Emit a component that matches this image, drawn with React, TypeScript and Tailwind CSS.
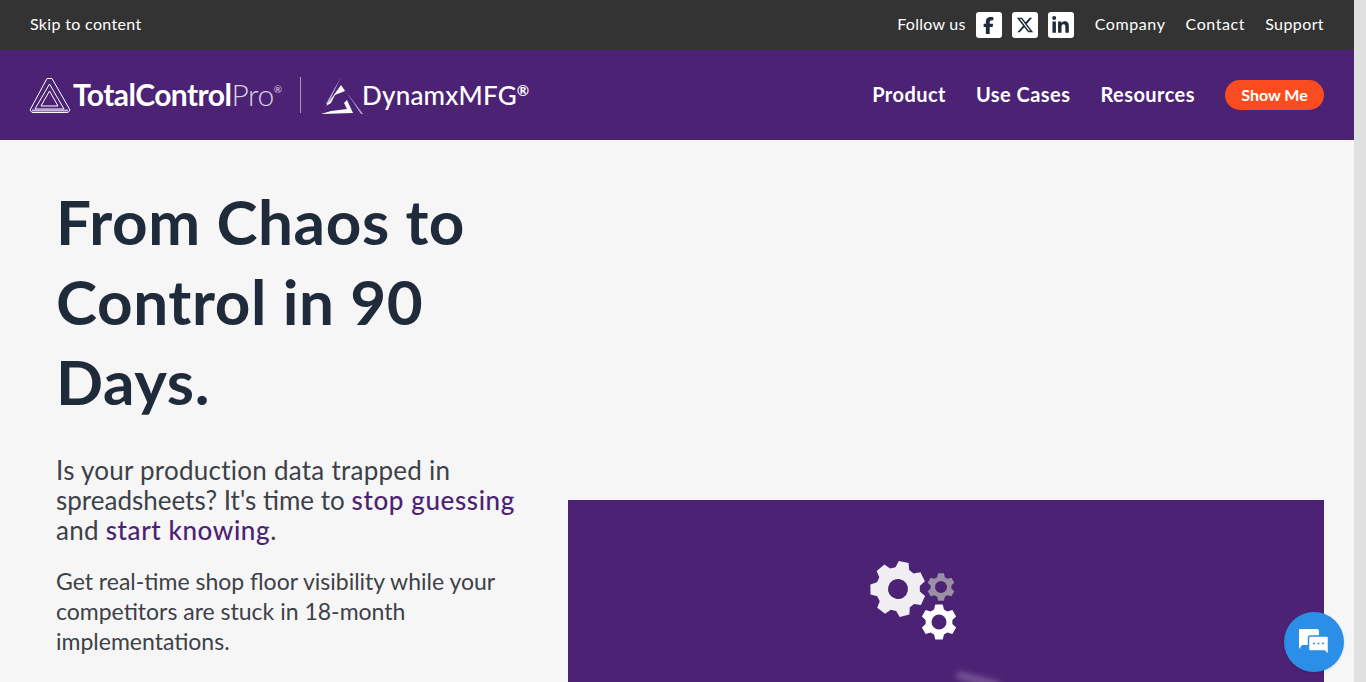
import React from 'react'
import { FaFacebookF, FaXTwitter, FaLinkedinIn } from 'react-icons/fa6'

const font = { fontFamily: 'Lato, "Liberation Sans", sans-serif' }

// gear outline with a round hole, six or seven teeth
function gearPath(cx: number, cy: number, teeth: number, outer: number, inner: number, hole: number) {
  const pts: string[] = []
  const step = (Math.PI * 2) / teeth
  for (let i = 0; i < teeth; i++) {
    const a = i * step - Math.PI / 2
    const corners: [number, number][] = [
      [inner, a - step * 0.36],
      [outer, a - step * 0.2],
      [outer, a + step * 0.2],
      [inner, a + step * 0.36],
    ]
    corners.forEach(([r, t]) => {
      pts.push(`${(cx + r * Math.cos(t)).toFixed(2)} ${(cy + r * Math.sin(t)).toFixed(2)}`)
    })
  }
  const ring = `M${cx - hole} ${cy}a${hole} ${hole} 0 1 0 ${hole * 2} 0a${hole} ${hole} 0 1 0 ${-hole * 2} 0Z`
  return `M${pts.join('L')}Z${ring}`
}

function Gears() {
  return (
    <svg width="90" height="84" viewBox="0 0 90 84" className="block">
      <path d={gearPath(29, 33, 7, 28, 22, 10)} fill="#f0eef2" fillRule="evenodd" transform="rotate(12 29 33)" />
      <path d={gearPath(72, 31, 6, 14, 10.5, 6)} fill="#9a8fa5" fillRule="evenodd" />
      <path d={gearPath(70, 66, 6, 18, 13.5, 7.5)} fill="#ffffff" fillRule="evenodd" />
    </svg>
  )
}

function TcpMark() {
  return (
    <svg width="42" height="36" viewBox="0 0 42 36" fill="none" stroke="#fff" strokeWidth="1" className="-ml-[1px] block">
      <path d="M18 1.500h5L41 33l-2 2.500H3L1 33Z" />
      <path d="M20.500 7L35 32H6Z" />
      <path d="M20.500 14L29 29H12Z" />
      <path d="M3 33.500H39" stroke="#c9b8dc" strokeWidth="2" />
    </svg>
  )
}

function DynamxMark() {
  return (
    <svg width="42" height="37" viewBox="0 0 42 37" className="block">
      <path d="M20 0L5 27l2 0Z" fill="#fff" fillOpacity="0.7" />
      <path d="M20 8l22 29h-2L24 13Z" fill="#fff" fillOpacity="0.6" />
      <path d="M5 29L20 8l4 6-10 4-4 8Z" fill="#fff" />
      <path d="M0 37l32-1-6-13-3 3 3 6-16 2Z" fill="#fff" />
    </svg>
  )
}

function SocialTile({ children }: { children: React.ReactNode }) {
  return (
    <a className="flex h-[26px] w-[26px] items-center justify-center rounded-[3px] bg-white text-[#1f2a3a]">
      {children}
    </a>
  )
}

function ChatIcon() {
  return (
    <svg width="32" height="28" viewBox="0 0 32 28" className="block">
      <path d="M2 1h17a2 2 0 0 1 2 2v14H4l-3 4V2a1 1 0 0 1 1-1Z" fill="#fff" />
      <path
        d="M12 8h17a1.500 1.500 0 0 1 1.500 1.500V27l-4-4H12a1.500 1.500 0 0 1-1.500-1.500v-12A1.500 1.500 0 0 1 12 8Z"
        fill="#fff"
        stroke="#2b8fe8"
        strokeWidth="1.500"
      />
      <circle cx="16" cy="15.500" r="1" fill="#2b8fe8" />
      <circle cx="20.500" cy="15.500" r="1" fill="#2b8fe8" />
      <circle cx="25" cy="15.500" r="1" fill="#2b8fe8" />
    </svg>
  )
}

export default function App() {
  return (
    <div className="relative flex h-[682px] w-full overflow-hidden bg-[#e0e0e0]" style={font}>
      <div className="flex min-w-0 flex-1 flex-col bg-[#f6f6f6]">
        {/* top bar */}
        <div className="flex h-[50px] shrink-0 items-center justify-between bg-[#333333] pb-[2px] pl-[30px] pr-[30px] text-[16px] text-white">
          <a className="tracking-[0.33px]">Skip to content</a>
          <div className="flex items-center">
            <span className="mr-[10px] tracking-[0.25px]">Follow us</span>
            <div className="flex gap-[10px] pt-[2px]">
              <SocialTile><FaFacebookF size={17} /></SocialTile>
              <SocialTile><FaXTwitter size={18} /></SocialTile>
              <SocialTile><FaLinkedinIn size={19} /></SocialTile>
            </div>
            <div className="ml-[21px] flex gap-[20px] tracking-[0.6px]">
              <a>Company</a>
              <a>Contact</a>
              <a className="tracking-[0.4px]">Support</a>
            </div>
          </div>
        </div>

        {/* nav */}
        <div className="flex h-[90px] shrink-0 items-center justify-between bg-[#4c2275] pl-[30px] pr-[30px] text-white">
          <div className="flex items-center">
            <TcpMark />
            <span className="mb-[2px] ml-[2px] text-[30px] font-bold leading-none tracking-[-0.55px]">
              TotalControl<span className="font-light tracking-[-0.4px] text-[#d8cfe2]">Pro</span>
            </span>
            <span className="mb-[12px] text-[10px] text-[#d8cfe2]">®</span>
            <div className="ml-[18px] mr-[20px] h-[36px] w-px bg-[#a995bd]" />
            <DynamxMark />
            <span className="mb-[1px] -ml-[1px] text-[26px] font-medium leading-none tracking-[0.2px]">DynamxMFG</span>
            <span className="mb-[10px] text-[15px] font-bold leading-none">®</span>
          </div>
          <div className="flex items-center gap-[30px] pb-[2px] text-[20px] font-bold tracking-[0.45px]">
            <a>Product</a>
            <a>Use Cases</a>
            <a>Resources</a>
            <a className="mt-[2px] flex h-[30px] w-[99px] items-center justify-center rounded-full bg-[#fb4c1f] pb-[1px] text-[16px] tracking-normal">
              Show Me
            </a>
          </div>
        </div>

        {/* hero */}
        <div className="flex min-h-0 flex-1 pl-[56px] pr-[30px]">
          <div className="w-[512px] shrink-0 pt-[41px] text-[#3d4148]">
            <h1 className="w-[470px] text-[62px] font-bold leading-[80px] tracking-[0.6px] text-[#1f2a3a]">
              From Chaos to Control in 90 Days.
            </h1>
            <p className="mt-[34px] w-[470px] text-[26px] leading-[30px] tracking-[0.25px]">
              Is your production data trapped in <span className="tracking-normal">spreadsheets? It's time to</span>{' '}
              <a className="whitespace-nowrap font-medium tracking-[0.6px] text-[#4c2275]">stop guessing</a> and{' '}
              <a className="whitespace-nowrap font-medium tracking-[0.6px] text-[#4c2275]">start knowing</a>.
            </p>
            <p className="mt-[21px] w-[460px] text-[23px] leading-[30px]">
              Get real-time shop floor visibility while your competitors are stuck in 18-month implementations.
            </p>
          </div>
          <div className="flex-1 pt-[360px]">
            <div className="relative h-[300px] bg-[#4c2275]">
              <div className="flex justify-center pt-[56px]">
                <div className="mr-[64px]">
                  <Gears />
                </div>
              </div>
              <div className="absolute left-[388px] top-[177px] h-[6px] w-[44px] rotate-[14deg] rounded-full bg-white/30 blur-[3px]" />
            </div>
          </div>
        </div>
      </div>

      {/* page scrollbar */}
      <div className="w-[12px] shrink-0 bg-[#e0e0e0]" />

      {/* chat bubble */}
      <a className="absolute left-[1284px] top-[612px] flex h-[60px] w-[60px] items-center justify-center rounded-full bg-[#2b8fe8] shadow-sm">
        <ChatIcon />
      </a>
    </div>
  )
}
